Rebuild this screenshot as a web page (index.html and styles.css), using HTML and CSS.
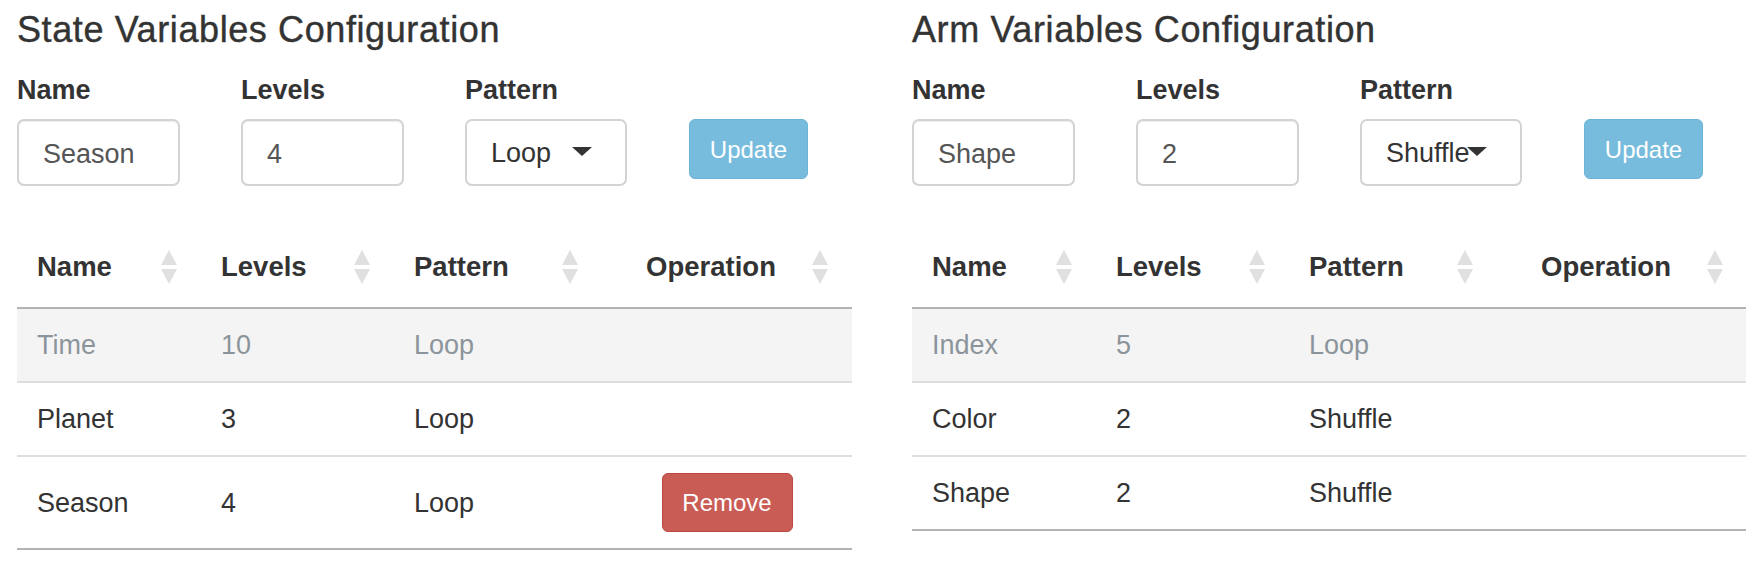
FILE: index.html
```html
<!DOCTYPE html>
<html lang="en">
<head>
<meta charset="utf-8">
<title>Variables Configuration</title>
<link rel="stylesheet" href="styles.css">
</head>
<body>
<div class="page">
  <section class="panel">
    <h3 class="title">State Variables Configuration</h3>
    <div class="form">
      <label class="lbl">Name</label>
      <label class="lbl">Levels</label>
      <label class="lbl">Pattern</label>
      <span class="lbl"></span>
      <input class="ctl" type="text" value="Season">
      <input class="ctl" type="text" value="4">
      <div class="select">Loop<span class="caret"></span></div>
      <button class="btn btn-update" type="button">Update</button>
    </div>
    <table class="tbl">
      <colgroup><col class="c1"><col class="c2"><col class="c3"><col class="c4"></colgroup>
      <thead>
        <tr>
          <th>Name<svg class="sort" viewBox="0 0 16 34"><polygon points="8,0 16,15 0,15"/><polygon points="0,19 16,19 8,34"/></svg></th>
          <th>Levels<svg class="sort" viewBox="0 0 16 34"><polygon points="8,0 16,15 0,15"/><polygon points="0,19 16,19 8,34"/></svg></th>
          <th>Pattern<svg class="sort" viewBox="0 0 16 34"><polygon points="8,0 16,15 0,15"/><polygon points="0,19 16,19 8,34"/></svg></th>
          <th class="op">Operation<svg class="sort" viewBox="0 0 16 34"><polygon points="8,0 16,15 0,15"/><polygon points="0,19 16,19 8,34"/></svg></th>
        </tr>
      </thead>
      <tbody>
        <tr class="locked"><td>Time</td><td>10</td><td>Loop</td><td class="op"></td></tr>
        <tr><td>Planet</td><td>3</td><td>Loop</td><td class="op"></td></tr>
        <tr><td>Season</td><td>4</td><td>Loop</td><td class="op"><button class="btn btn-remove" type="button">Remove</button></td></tr>
      </tbody>
    </table>
  </section>

  <section class="panel">
    <h3 class="title">Arm Variables Configuration</h3>
    <div class="form">
      <label class="lbl">Name</label>
      <label class="lbl">Levels</label>
      <label class="lbl">Pattern</label>
      <span class="lbl"></span>
      <input class="ctl" type="text" value="Shape">
      <input class="ctl" type="text" value="2">
      <div class="select">Shuffle<span class="caret"></span></div>
      <button class="btn btn-update" type="button">Update</button>
    </div>
    <table class="tbl">
      <colgroup><col class="c1"><col class="c2"><col class="c3"><col class="c4"></colgroup>
      <thead>
        <tr>
          <th>Name<svg class="sort" viewBox="0 0 16 34"><polygon points="8,0 16,15 0,15"/><polygon points="0,19 16,19 8,34"/></svg></th>
          <th>Levels<svg class="sort" viewBox="0 0 16 34"><polygon points="8,0 16,15 0,15"/><polygon points="0,19 16,19 8,34"/></svg></th>
          <th>Pattern<svg class="sort" viewBox="0 0 16 34"><polygon points="8,0 16,15 0,15"/><polygon points="0,19 16,19 8,34"/></svg></th>
          <th class="op">Operation<svg class="sort" viewBox="0 0 16 34"><polygon points="8,0 16,15 0,15"/><polygon points="0,19 16,19 8,34"/></svg></th>
        </tr>
      </thead>
      <tbody>
        <tr class="locked"><td>Index</td><td>5</td><td>Loop</td><td class="op"></td></tr>
        <tr><td>Color</td><td>2</td><td>Shuffle</td><td class="op"></td></tr>
        <tr><td>Shape</td><td>2</td><td>Shuffle</td><td class="op"></td></tr>
      </tbody>
    </table>
  </section>
</div>
</body>
</html>
```

FILE: styles.css
```css
html, body {
  margin: 0;
  padding: 0;
  overflow: hidden;
  background: #fff;
}

body {
  font-family: "Liberation Sans", Arial, Helvetica, sans-serif;
  color: #333;
}

.page {
  display: flex;
  gap: 60px;
  padding: 10px 0 0 17px;
}

.panel {
  flex: 0 0 835px;
  width: 835px;
}

.title {
  margin: 0 0 25px;
  font-size: 36px;
  line-height: 40px;
  font-weight: normal;
  letter-spacing: 0.6px;
  color: #333;
  -webkit-text-stroke: 0.4px #333;
}

.form {
  display: grid;
  grid-template-columns: repeat(4, 163px);
  column-gap: 61px;
  row-gap: 14px;
  align-items: start;
}

.lbl {
  display: block;
  font-size: 27px;
  font-weight: bold;
  line-height: 30px;
  height: 30px;
  color: #333;
}

.ctl {
  box-sizing: border-box;
  width: 163px;
  height: 67px;
  margin: 0;
  border: 2px solid #d3d3d3;
  border-radius: 7px;
  padding: 4px 24px 0;
  font-family: "Liberation Sans", Arial, Helvetica, sans-serif;
  font-size: 27px;
  color: #555;
  background: #fff;
  box-shadow: inset 0 1px 1px rgba(0, 0, 0, 0.075);
  outline: none;
}

.select {
  position: relative;
  box-sizing: border-box;
  width: 162px;
  height: 67px;
  border: 2px solid #d3d3d3;
  border-radius: 7px;
  padding: 2px 24px 0;
  display: flex;
  align-items: center;
  font-size: 27px;
  color: #333;
  white-space: nowrap;
  background: #fff;
}

.caret {
  position: absolute;
  left: 105px;
  top: 26px;
  width: 0;
  height: 0;
  border-left: 10px solid transparent;
  border-right: 10px solid transparent;
  border-top: 9px solid #333;
}

.btn {
  box-sizing: border-box;
  margin: 0;
  font-family: "Liberation Sans", Arial, Helvetica, sans-serif;
  font-size: 24px;
  color: #fff;
  border-radius: 6px;
  cursor: pointer;
}

.btn-update {
  width: 119px;
  height: 60px;
  padding: 2px 0 0;
  background: #77bcdc;
  border: 1px solid #6cb5d7;
}

.tbl {
  width: 835px;
  margin-top: 41px;
  border-collapse: separate;
  border-spacing: 0;
  table-layout: fixed;
}

.c1 { width: 184px; }
.c2 { width: 193px; }
.c3 { width: 208px; }
.c4 { width: 250px; }

.tbl th {
  position: relative;
  text-align: left;
  font-size: 27.5px;
  font-weight: bold;
  line-height: 40px;
  padding: 20px 52px 20px 20px;
  border-bottom: 2px solid #b3b3b3;
  color: #333;
  white-space: nowrap;
}

.tbl th.op {
  text-align: center;
}

.sort {
  position: absolute;
  right: 24px;
  top: 50%;
  margin-top: -17px;
  width: 16px;
  height: 34px;
  fill: #e0e0e0;
}

.tbl td {
  font-size: 27px;
  line-height: 40px;
  padding: 16px 20px;
  border-bottom: 2px solid #dedede;
  color: #333;
  vertical-align: middle;
}

.tbl tbody tr:last-child td {
  border-bottom-color: #b3b3b3;
}

.tbl tr.locked td {
  background: #f4f4f4;
  color: #8c949b;
}

.tbl td.op {
  text-align: center;
}

.btn-remove {
  display: inline-block;
  vertical-align: top;
  width: 131px;
  height: 59px;
  padding: 0;
  line-height: 57px;
  background: #c95c55;
  border: 1px solid #bd4841;
}
```
